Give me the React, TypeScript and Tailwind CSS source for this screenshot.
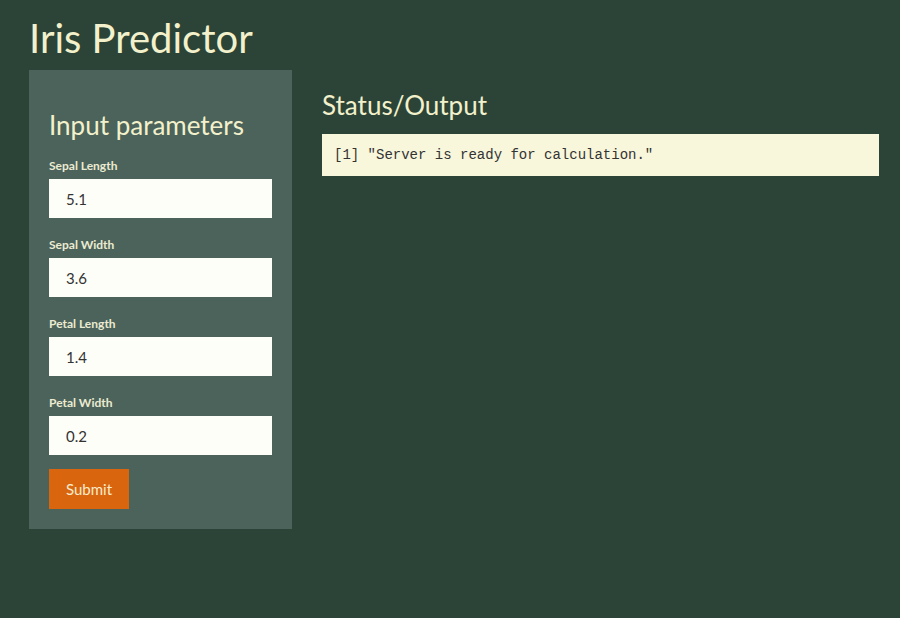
export default function App() {
  const fields = [
    { label: 'Sepal Length', value: '5.1' },
    { label: 'Sepal Width', value: '3.6' },
    { label: 'Petal Length', value: '1.4' },
    { label: 'Petal Width', value: '0.2' },
  ];

  return (
    <div className="min-h-[618px] bg-[#2c4437] font-['Lato',sans-serif] text-[#f3f1cc]">
      <div className="pl-[30px] pr-[21px] pt-[14px]">
        {/* Title */}
        <h1 className="text-[40px] leading-[48px] font-normal text-[#f3f1cc] -ml-[1px]">Iris Predictor</h1>

        <div className="flex gap-[30px] mt-[8px]">
          {/* Sidebar */}
          <div className="w-[263px] shrink-0 bg-[#4b635a] px-[20px] pt-[38px] pb-[20px] -ml-[1px]">
            <h2 className="text-[26px] leading-[34px] font-normal text-[#f3f1cc]">Input parameters</h2>
            <div className="mt-[16px]">
              {fields.map((f) => (
                <div key={f.label} className="mb-[19px]">
                  <label className="block text-[12px] font-bold leading-[15px] text-[#ecebd2]">{f.label}</label>
                  <input
                    readOnly
                    value={f.value}
                    className="mt-[6px] block w-full h-[39px] bg-[#fefef8] px-[17px] text-[15px] text-[#333] font-['Lato',sans-serif] outline-none"
                  />
                </div>
              ))}
              <button className="-mt-[5px] w-[80px] h-[40px] bg-[#d9650f] text-[15px] text-[#f7eccb]">Submit</button>
            </div>
          </div>

          {/* Main */}
          <div className="flex-1 pt-[18px]">
            <h2 className="text-[26px] leading-[34px] font-normal text-[#f3f1cc]">Status/Output</h2>
            <pre className="mt-[12px] h-[42px] bg-[#f8f6db] px-[12px] py-[11px] text-[14px] leading-[20px] text-[#333] font-['Liberation_Mono',monospace]">
              [1] "Server is ready for calculation."
            </pre>
          </div>
        </div>
      </div>
    </div>
  );
}
